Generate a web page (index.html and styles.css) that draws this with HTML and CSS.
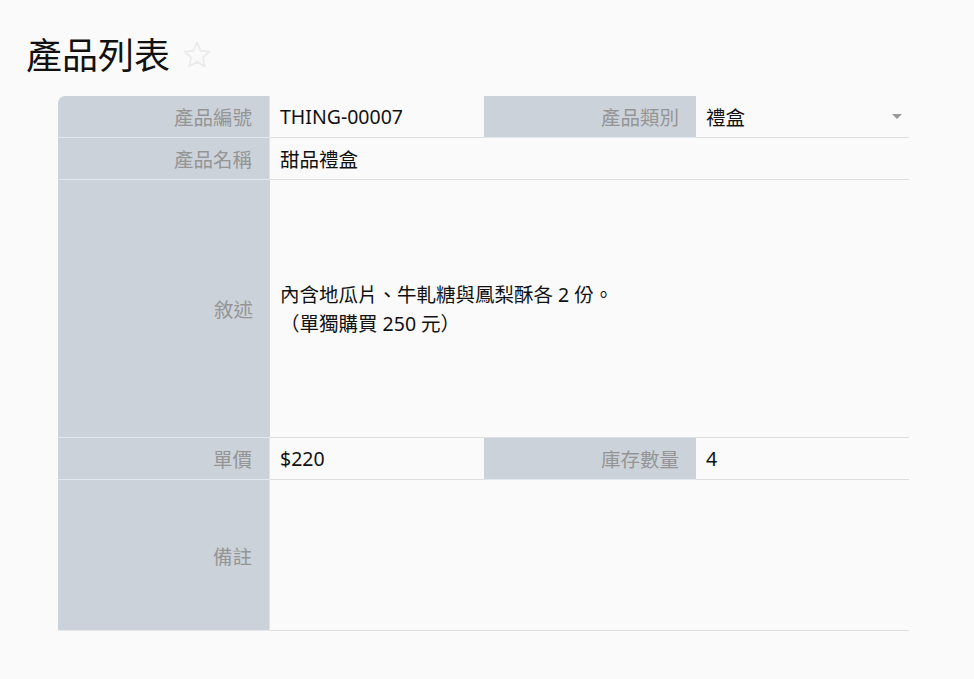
FILE: index.html
```html
<!DOCTYPE html>
<html lang="zh-Hant">
<head>
<meta charset="utf-8">
<link rel="stylesheet" href="styles.css">
</head>
<body>
<div class="page">
  <h1 class="title">產品列表 <svg class="star" width="32" height="32" viewBox="0 0 32 32"><path d="M16 3.5 L19.6 11.8 L28.5 12.6 L21.8 18.6 L23.8 27.4 L16 22.8 L8.2 27.4 L10.2 18.6 L3.5 12.6 L12.4 11.8 Z" fill="none" stroke="#ececec" stroke-width="2" stroke-linejoin="round"/></svg></h1>
  <div class="form">
    <div class="label first">產品編號</div>
    <div class="value">THING-00007</div>
    <div class="label">產品類別</div>
    <div class="value select">禮盒<span class="caret"></span></div>

    <div class="label">產品名稱</div>
    <div class="value span3">甜品禮盒</div>

    <div class="label tall">敘述</div>
    <div class="value span3 tall multi">內含地瓜片、牛軋糖與鳳梨酥各 2 份。<br>（單獨購買 250 元）</div>

    <div class="label">單價</div>
    <div class="value">$220</div>
    <div class="label">庫存數量</div>
    <div class="value">4</div>

    <div class="label notes">備註</div>
    <div class="value span3 notes"></div>
  </div>
</div>
</body>
</html>
```
FILE: styles.css
```css
* { box-sizing: border-box; }
html, body { margin: 0; padding: 0; background: #fafafa; }
body {
  font-family: "Noto Sans", "Noto Sans CJK TC", sans-serif;
  color: #111;
}
.page { padding: 28px 0 0 26px; }
.title {
  margin: 0;
  font-size: 36px;
  font-weight: 400;
  line-height: 50px;
  display: flex;
  align-items: center;
  gap: 11px;
  font-family: "Noto Sans CJK TC", sans-serif;
}
.star { margin-top: 4px; }
.form {
  margin: 18px 0 0 32px;
  width: 851px;
  display: grid;
  grid-template-columns: 212px 214px 212px 213px;
  font-size: 19.5px;
}
.label {
  background: #cbd2da;
  color: #959595;
  text-align: right;
  padding-right: 17px;
  height: 42px;
  display: flex;
  align-items: center;
  justify-content: flex-end;
  border-bottom: 1px solid #e4e7eb;
  font-family: "Noto Sans CJK TC", sans-serif;
}
.label.first { border-top-left-radius: 7px; }
.form > .label:nth-child(4n+1) { border-right: 1px solid #e2e2e2; }
.value {
  height: 42px;
  display: flex;
  align-items: center;
  padding-left: 10px;
  border-bottom: 1px solid #dedede;
  font-family: "Noto Sans", "Noto Sans CJK TC", sans-serif;
}
.span3 { grid-column: span 3; }
.tall { height: 258px; }
.multi { line-height: 29px; display: block; padding-top: 100px; }
.notes { height: 151px; }
.select { position: relative; }
.caret {
  position: absolute;
  right: 7px;
  top: 18px;
  width: 0; height: 0;
  border-left: 5px solid transparent;
  border-right: 5px solid transparent;
  border-top: 5px solid #999;
}
```
